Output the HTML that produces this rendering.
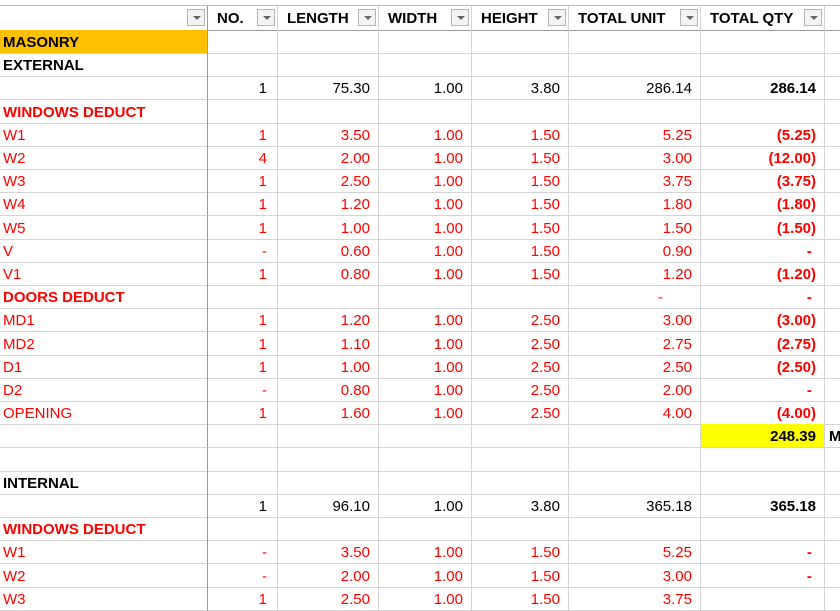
<!DOCTYPE html>
<html><head><meta charset="utf-8"><style>
body{margin:0;width:840px;height:600px;overflow:hidden;background:#fff;font-family:"Liberation Sans",Arial,sans-serif;font-size:15px;color:#000;position:relative}
.r{position:absolute;left:0;width:840px;height:24px;display:flex}
.c{box-sizing:border-box;height:24px;border-right:1px solid #d4d4d4;border-bottom:1px solid #d4d4d4;line-height:26px;text-align:right;padding-right:8px;white-space:nowrap;overflow:hidden}
.c:nth-child(1){width:208px;text-align:left;padding-left:3px;border-right:1px solid #9a9a9a}
.c:nth-child(2){width:70px;padding-right:10px}.c:nth-child(3){width:101px}.c:nth-child(4){width:93px}.c:nth-child(5){width:97px}.c:nth-child(6){width:132px}.c:nth-child(7){width:124px}.c:nth-child(8){width:15px;padding:0 0 0 4px;text-align:left;border-right:none}
.red{color:#f00}.b{font-weight:bold}
.h{position:absolute;left:0;top:5px;width:840px;height:25px;display:flex;border-top:1px solid #bdbdbd}
.h .c{height:25px;border-bottom:1px solid #9a9a9a;text-align:left;padding-left:9px;font-weight:bold;position:relative;line-height:26px}
.dd{position:absolute;right:2px;top:3px;width:18px;height:17px;box-sizing:border-box;border:1px solid #b5b5b5;background:#f4f4f4}
.dd:after{content:"";position:absolute;left:5px;top:6px;border-left:4px solid transparent;border-right:4px solid transparent;border-top:4px solid #666}
</style></head><body>
<div class="h"><div class="c"><span class="dd"></span></div><div class="c">NO.<span class="dd"></span></div><div class="c">LENGTH<span class="dd"></span></div><div class="c">WIDTH<span class="dd"></span></div><div class="c">HEIGHT<span class="dd"></span></div><div class="c">TOTAL UNIT<span class="dd"></span></div><div class="c">TOTAL QTY<span class="dd"></span></div><div class="c"></div></div>

<div class="r" style="top:30px"><div class="c b" style="background:#ffc000">MASONRY</div><div class="c"></div><div class="c"></div><div class="c"></div><div class="c"></div><div class="c"></div><div class="c"></div><div class="c"></div></div>
<div class="r" style="top:53px"><div class="c b">EXTERNAL</div><div class="c"></div><div class="c"></div><div class="c"></div><div class="c"></div><div class="c"></div><div class="c"></div><div class="c"></div></div>
<div class="r" style="top:76px"><div class="c"></div><div class="c">1</div><div class="c">75.30</div><div class="c">1.00</div><div class="c">3.80</div><div class="c">286.14</div><div class="c b">286.14</div><div class="c"></div></div>
<div class="r" style="top:100px"><div class="c b red">WINDOWS DEDUCT</div><div class="c"></div><div class="c"></div><div class="c"></div><div class="c"></div><div class="c"></div><div class="c"></div><div class="c"></div></div>
<div class="r red" style="top:123px"><div class="c">W1</div><div class="c">1</div><div class="c">3.50</div><div class="c">1.00</div><div class="c">1.50</div><div class="c">5.25</div><div class="c b">(5.25)</div><div class="c"></div></div>
<div class="r red" style="top:146px"><div class="c">W2</div><div class="c">4</div><div class="c">2.00</div><div class="c">1.00</div><div class="c">1.50</div><div class="c">3.00</div><div class="c b">(12.00)</div><div class="c"></div></div>
<div class="r red" style="top:169px"><div class="c">W3</div><div class="c">1</div><div class="c">2.50</div><div class="c">1.00</div><div class="c">1.50</div><div class="c">3.75</div><div class="c b">(3.75)</div><div class="c"></div></div>
<div class="r red" style="top:192px"><div class="c">W4</div><div class="c">1</div><div class="c">1.20</div><div class="c">1.00</div><div class="c">1.50</div><div class="c">1.80</div><div class="c b">(1.80)</div><div class="c"></div></div>
<div class="r red" style="top:216px"><div class="c">W5</div><div class="c">1</div><div class="c">1.00</div><div class="c">1.00</div><div class="c">1.50</div><div class="c">1.50</div><div class="c b">(1.50)</div><div class="c"></div></div>
<div class="r red" style="top:239px"><div class="c">V</div><div class="c">-</div><div class="c">0.60</div><div class="c">1.00</div><div class="c">1.50</div><div class="c">0.90</div><div class="c b">-&nbsp;</div><div class="c"></div></div>
<div class="r red" style="top:262px"><div class="c">V1</div><div class="c">1</div><div class="c">0.80</div><div class="c">1.00</div><div class="c">1.50</div><div class="c">1.20</div><div class="c b">(1.20)</div><div class="c"></div></div>
<div class="r red" style="top:285px"><div class="c b">DOORS DEDUCT</div><div class="c"></div><div class="c"></div><div class="c"></div><div class="c"></div><div class="c">-&nbsp;&nbsp;&nbsp;&nbsp;&nbsp;&nbsp;&nbsp;</div><div class="c b">-&nbsp;</div><div class="c"></div></div>
<div class="r red" style="top:308px"><div class="c">MD1</div><div class="c">1</div><div class="c">1.20</div><div class="c">1.00</div><div class="c">2.50</div><div class="c">3.00</div><div class="c b">(3.00)</div><div class="c"></div></div>
<div class="r red" style="top:332px"><div class="c">MD2</div><div class="c">1</div><div class="c">1.10</div><div class="c">1.00</div><div class="c">2.50</div><div class="c">2.75</div><div class="c b">(2.75)</div><div class="c"></div></div>
<div class="r red" style="top:355px"><div class="c">D1</div><div class="c">1</div><div class="c">1.00</div><div class="c">1.00</div><div class="c">2.50</div><div class="c">2.50</div><div class="c b">(2.50)</div><div class="c"></div></div>
<div class="r red" style="top:378px"><div class="c">D2</div><div class="c">-</div><div class="c">0.80</div><div class="c">1.00</div><div class="c">2.50</div><div class="c">2.00</div><div class="c b">-&nbsp;</div><div class="c"></div></div>
<div class="r red" style="top:401px"><div class="c">OPENING</div><div class="c">1</div><div class="c">1.60</div><div class="c">1.00</div><div class="c">2.50</div><div class="c">4.00</div><div class="c b">(4.00)</div><div class="c"></div></div>
<div class="r" style="top:424px"><div class="c"></div><div class="c"></div><div class="c"></div><div class="c"></div><div class="c"></div><div class="c"></div><div class="c b" style="background:#ff0">248.39</div><div class="c b">M</div></div>
<div class="r" style="top:448px"><div class="c"></div><div class="c"></div><div class="c"></div><div class="c"></div><div class="c"></div><div class="c"></div><div class="c"></div><div class="c"></div></div>
<div class="r" style="top:471px"><div class="c b">INTERNAL</div><div class="c"></div><div class="c"></div><div class="c"></div><div class="c"></div><div class="c"></div><div class="c"></div><div class="c"></div></div>
<div class="r" style="top:494px"><div class="c"></div><div class="c">1</div><div class="c">96.10</div><div class="c">1.00</div><div class="c">3.80</div><div class="c">365.18</div><div class="c b">365.18</div><div class="c"></div></div>
<div class="r" style="top:517px"><div class="c b red">WINDOWS DEDUCT</div><div class="c"></div><div class="c"></div><div class="c"></div><div class="c"></div><div class="c"></div><div class="c"></div><div class="c"></div></div>
<div class="r red" style="top:540px"><div class="c">W1</div><div class="c">-</div><div class="c">3.50</div><div class="c">1.00</div><div class="c">1.50</div><div class="c">5.25</div><div class="c b">-&nbsp;</div><div class="c"></div></div>
<div class="r red" style="top:564px"><div class="c">W2</div><div class="c">-</div><div class="c">2.00</div><div class="c">1.00</div><div class="c">1.50</div><div class="c">3.00</div><div class="c b">-&nbsp;</div><div class="c"></div></div>
<div class="r red" style="top:587px"><div class="c">W3</div><div class="c">1</div><div class="c">2.50</div><div class="c">1.00</div><div class="c">1.50</div><div class="c">3.75</div><div class="c b"></div><div class="c"></div></div>
</body></html>
